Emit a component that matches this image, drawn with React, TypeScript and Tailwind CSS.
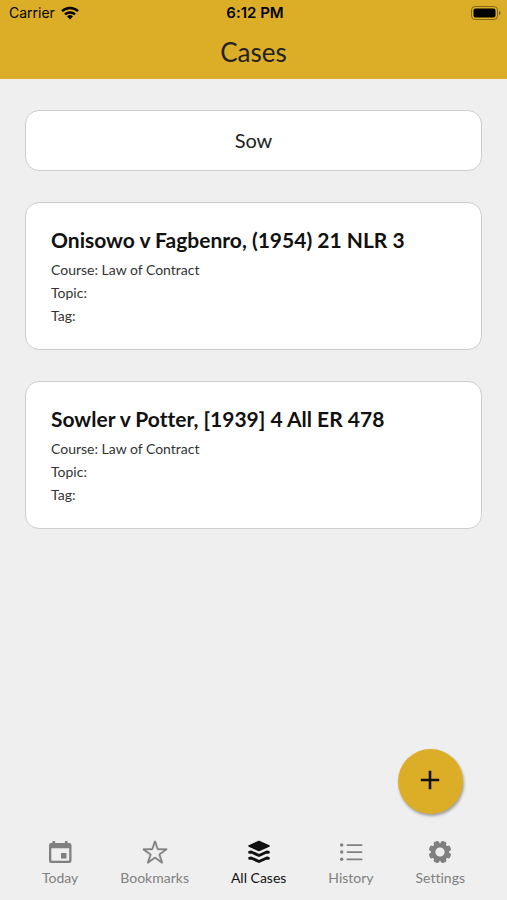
import { useState } from "react";
import type { ReactNode } from "react";
import { IoIosStarOutline } from "react-icons/io";

type CaseItem = {
  title: string;
  course: string;
  topic: string;
  tag: string;
};

const cases: CaseItem[] = [
  { title: "Onisowo v Fagbenro, (1954) 21 NLR 3", course: "Law of Contract", topic: "", tag: "" },
  { title: "Sowler v Potter, [1939] 4 All ER 478", course: "Law of Contract", topic: "", tag: "" },
];

function WifiIcon() {
  return (
    <svg viewBox="0 0 18 14" className="h-[14px] w-[18px]" aria-hidden="true">
      <g fill="none" stroke="currentColor" strokeWidth="2.5">
        <path d="M1 5.2a11.6 11.6 0 0 1 16 0" />
        <path d="M4 8.4a7.2 7.2 0 0 1 10 0" />
      </g>
      <path d="M9 13.4 6.1 10.5a4.2 4.2 0 0 1 5.8 0z" fill="currentColor" />
    </svg>
  );
}

function BatteryIcon() {
  return (
    <svg viewBox="0 0 30 14" className="h-[14px] w-[30px]" aria-hidden="true">
      <rect x="0.5" y="0.5" width="26" height="13" rx="3.6" fill="none" stroke="#000" strokeOpacity="0.4" />
      <rect x="2.5" y="2.5" width="22" height="9" rx="2" fill="#000" />
      <path d="M28 4.8c2 .9 2 3.5 0 4.4z" fill="#000" fillOpacity="0.45" />
    </svg>
  );
}

function CalendarIcon() {
  return (
    <svg viewBox="0 0 26 26" className="size-[26px]" aria-hidden="true">
      <path
        fill="currentColor"
        fillRule="evenodd"
        d="M5.5 2h2.600v2h9.800V2h2.600v2h1.800A2.200 2.200 0 0 1 24.500 6.200v15.600a2.200 2.200 0 0 1-2.200 2.200H4.200A2.200 2.200 0 0 1 2 21.800V6.200A2.200 2.200 0 0 1 4.200 4h1.300zM4.300 9.300v11.700c0 .5.300.8.800.8h16.300c.5 0 .8-.3.800-.8V9.300zM14 14h5.500v5.500H14z"
      />
    </svg>
  );
}

function LayersIcon() {
  return (
    <svg viewBox="0 0 26 26" className="size-[26px]" aria-hidden="true">
      <path
        d="M13 2.500 23 7l-10 4.500L3 7z"
        fill="currentColor"
        stroke="currentColor"
        strokeWidth="1.600"
        strokeLinejoin="round"
      />
      <g fill="none" stroke="currentColor" strokeWidth="3" strokeLinecap="round" strokeLinejoin="round">
        <path d="M3.700 13.200 5.200 13l7.800 3.500 7.800-3.500 1.500.2" />
        <path d="M3.700 19.200 5.200 19l7.800 3.500 7.800-3.500 1.500.2" />
      </g>
    </svg>
  );
}

function ListIcon() {
  return (
    <svg viewBox="0 0 26 26" className="size-[26px]" aria-hidden="true">
      <g fill="currentColor">
        <circle cx="3.700" cy="6" r="1.700" />
        <circle cx="3.700" cy="13" r="1.700" />
        <circle cx="3.700" cy="20.300" r="1.700" />
        <rect x="8.500" y="5.200" width="16" height="1.700" rx="0.800" />
        <rect x="8.500" y="12.200" width="16" height="1.700" rx="0.800" />
        <rect x="8.500" y="19.500" width="16" height="1.700" rx="0.800" />
      </g>
    </svg>
  );
}

const teeth = [22.5, 67.5, 112.5, 157.5, 202.5, 247.5, 292.5, 337.5];

function GearIcon() {
  return (
    <svg viewBox="0 0 26 26" className="size-[26px]" aria-hidden="true">
      <circle cx="13" cy="13" r="6.900" fill="none" stroke="currentColor" strokeWidth="4.600" />
      {teeth.map((angle) => (
        <rect
          key={angle}
          x="10.200"
          y="1.700"
          width="5.600"
          height="5"
          rx="1.600"
          fill="currentColor"
          transform={`rotate(${angle} 13 13)`}
        />
      ))}
    </svg>
  );
}

function StatusBar() {
  return (
    <div className="grid grid-cols-3 items-center pt-[3px] pr-[6px] pl-[9px] font-['Inter',sans-serif] text-sm leading-5 text-black">
      <div className="flex items-center gap-[6px]">
        <span>Carrier</span>
        <WifiIcon />
      </div>
      <div className="text-center text-[15px] font-semibold">6:12 PM</div>
      <div className="flex justify-end">
        <BatteryIcon />
      </div>
    </div>
  );
}

function CaseCard({ item }: { item: CaseItem }) {
  return (
    <article className="rounded-[14px] border border-[#cdcdcd] bg-white px-[25px] pt-[19px] pb-[22px]">
      <h2 className="text-[21px] leading-9 font-bold text-[#111]">{item.title}</h2>
      <div className="text-[14px] leading-[23px] text-[#333]">
        <p>Course: {item.course}</p>
        <p>Topic: {item.topic}</p>
        <p>Tag: {item.tag}</p>
      </div>
    </article>
  );
}

function Tab({ icon, label, active = false }: { icon: ReactNode; label: string; active?: boolean }) {
  return (
    <button
      type="button"
      aria-current={active ? "page" : undefined}
      className={`flex flex-col items-center gap-[2px] ${active ? "text-[#111]" : "text-[#808080]"}`}
    >
      <span className="flex h-7 items-center">{icon}</span>
      <span className="text-[14px] leading-5">{label}</span>
    </button>
  );
}

export default function App() {
  const [query, setQuery] = useState("Sow");

  return (
    <div className="relative flex min-h-dvh flex-col bg-[#efefef] font-['Lato',sans-serif] [font-variant-ligatures:none]">
      {/* Header */}
      <header className="bg-[#dcae27] pb-[9px]">
        <StatusBar />
        <h1 className="pt-3 text-center text-[26px] leading-[35px] text-[#222]">Cases</h1>
      </header>

      {/* Search and results */}
      <main className="flex flex-1 flex-col gap-[31px] px-[25px] pt-[31px]">
        <input
          type="text"
          aria-label="Search cases"
          value={query}
          onChange={(e) => setQuery(e.target.value)}
          className="h-[61px] w-full rounded-[14px] border border-[#cdcdcd] bg-white px-6 pb-[2px] text-center text-[20px] text-[#222] outline-none"
        />
        {cases.map((item) => (
          <CaseCard key={item.title} item={item} />
        ))}
      </main>

      {/* Floating add button */}
      <button
        type="button"
        aria-label="Add case"
        className="absolute right-11 bottom-[86px] flex size-[65px] items-center justify-center rounded-full bg-[#dcae27] text-[#111] shadow-[1px_2px_3px_rgba(0,0,0,0.35)]"
      >
        <svg viewBox="0 0 20 20" className="mr-[2px] mb-1 size-5" aria-hidden="true">
          <path d="M10 .8v18.400M.8 10h18.400" stroke="currentColor" strokeWidth="2.600" />
        </svg>
      </button>

      {/* Tab bar */}
      <nav className="flex justify-evenly pt-3 pb-3">
        <Tab icon={<CalendarIcon />} label="Today" />
        <Tab icon={<IoIosStarOutline className="size-7 stroke-current [stroke-width:6px]" />} label="Bookmarks" />
        <Tab icon={<LayersIcon />} label="All Cases" active />
        <Tab icon={<ListIcon />} label="History" />
        <Tab icon={<GearIcon />} label="Settings" />
      </nav>
    </div>
  );
}
